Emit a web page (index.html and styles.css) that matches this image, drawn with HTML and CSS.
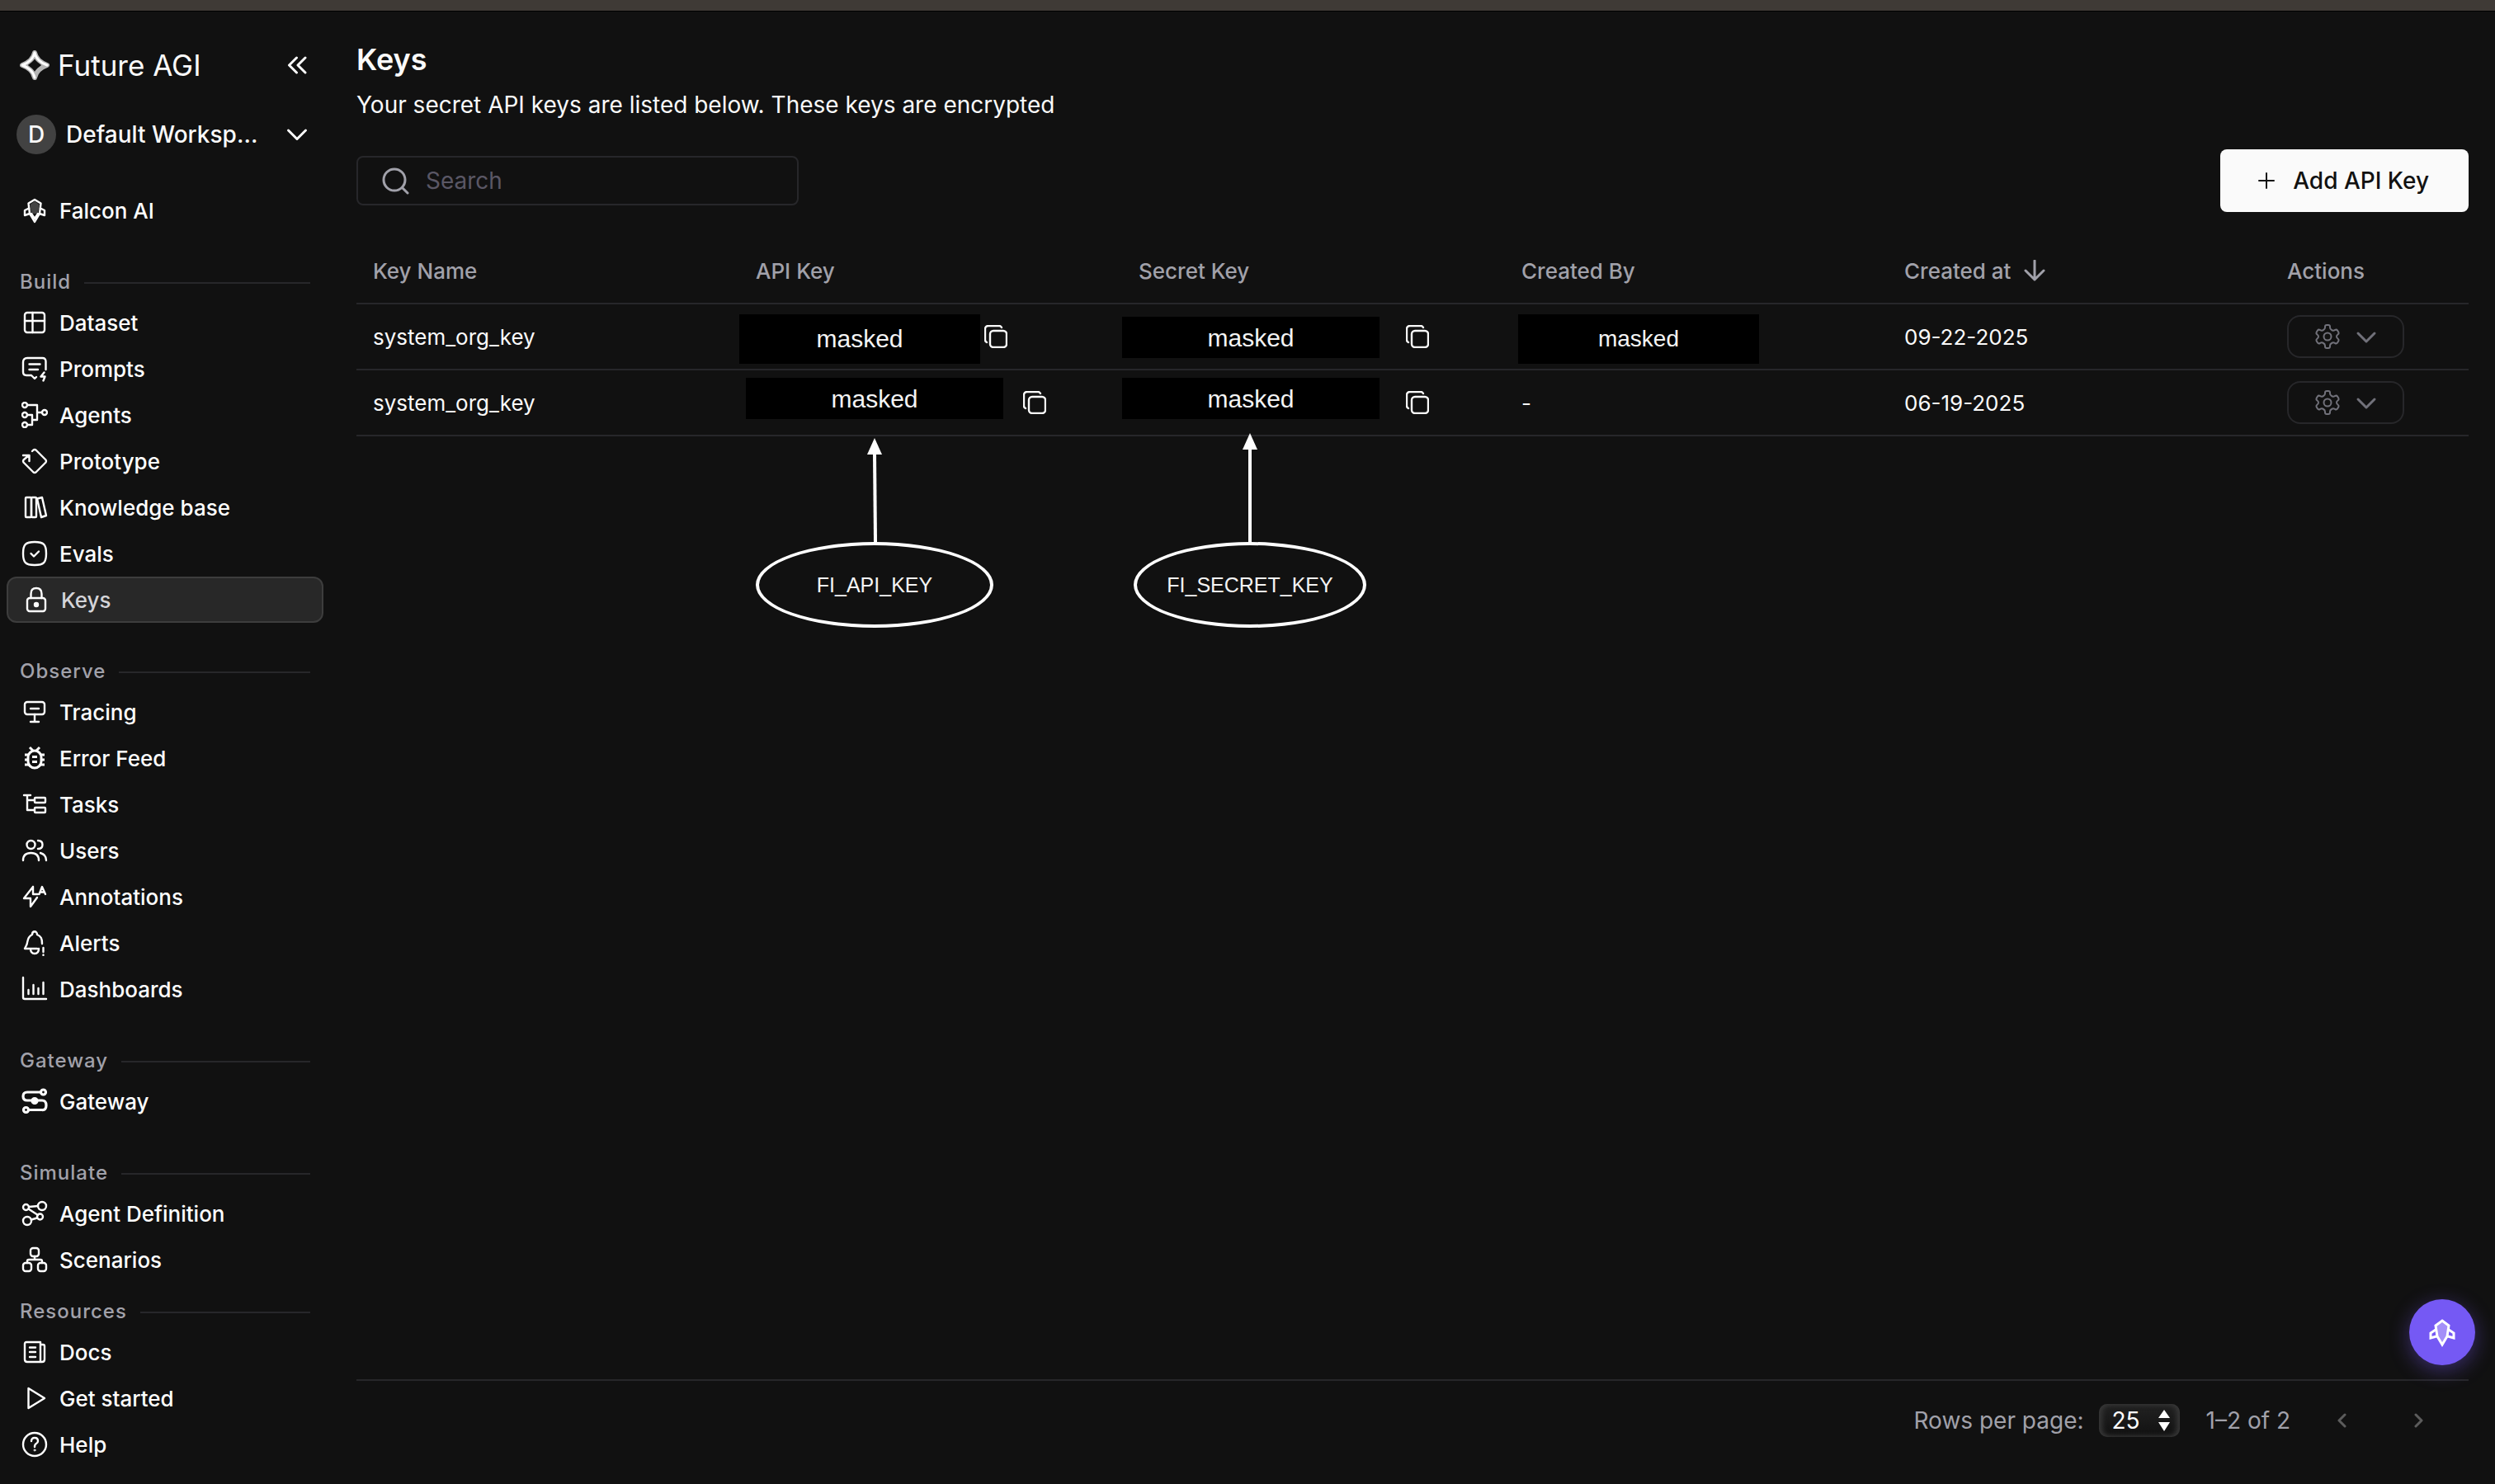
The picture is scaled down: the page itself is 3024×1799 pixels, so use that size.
FILE: index.html
```html
<!DOCTYPE html>
<html lang="en">
<head>
  <meta charset="UTF-8">
  <title>Keys - Future AGI</title>
  <link rel="stylesheet" href="styles.css">
</head>
<body>
  <div class="topbar"></div>

  <div class="layout">
    <aside class="sidebar">
      <div class="brand">
        <svg class="brand-mark" width="36" height="36" viewBox="0 0 36 36" fill="none" stroke-linejoin="round">
          <path d="M18 3C19.500 10 26 15.500 33 18C26 20.500 19.500 26 18 33C16.500 26 10 20.500 3 18C10 15.500 16.500 10 18 3Z" stroke="#b5b5b5" stroke-width="6"/>
          <path d="M18 3C16.500 10 10 15.500 3 18C10 20.500 16.500 26 18 33M18 3C19.500 10 26 15.500 33 18" stroke="#fff" stroke-width="3" stroke-linecap="round"/>
        </svg>
        <span class="brand-name">Future AGI</span>
        <button class="icon-btn" type="button" aria-label="Collapse sidebar">
          <svg width="24" height="24" viewBox="0 0 24 24" class="line bold"><path d="M11.500 3L2.500 12l9 9M22 3l-9 9 9 9"/></svg>
        </button>
      </div>

      <button class="workspace" type="button">
        <span class="avatar">D</span>
        <span class="workspace-name">Default Worksp...</span>
        <svg width="26" height="26" viewBox="0 0 26 26" class="line bold"><path d="M2.500 8L13 18.500 23.500 8"/></svg>
      </button>

      <nav>
        <a class="item" href="#">
          <svg width="32" height="32" viewBox="0 0 32 32" class="line"><path d="M16 3l7.500 4.500L22 20l-6 10-6-10L8.500 7.500z"/><path d="M16 5l5.500 4L20 20h-8L10.500 9z" fill="#444" stroke="none"/><path d="M9 13.500L4 16v6l6-2M23 13.500l5 2.500v6l-6-2M12 20l4 6 4-6"/></svg>
          Falcon AI
        </a>

        <h2 class="section">Build</h2>
        <a class="item" href="#">
          <svg width="32" height="32" viewBox="0 0 32 32" class="line"><rect x="4" y="4" width="24" height="24" rx="3"/><path d="M13.500 4v24M4 14h24"/></svg>
          Dataset
        </a>
        <a class="item" href="#">
          <svg width="32" height="32" viewBox="0 0 32 32" class="line"><path d="M29.500 17V7q0-4-4-4H7Q2 3 2 8v12q0 4 4 4h6l4 4 2-2M9.500 10.500h13M9.500 17H20"/><path d="M27.500 20.500l-4 5h5l-2 5"/></svg>
          Prompts
        </a>
        <a class="item" href="#">
          <svg width="32" height="32" viewBox="0 0 32 32" class="line"><circle cx="4" cy="4" r="3"/><circle cx="4" cy="16" r="3"/><circle cx="4" cy="28" r="3"/><circle cx="28" cy="13" r="3"/><path d="M7 4h12v18h-6M7 16h6v12H7M19 13h6"/></svg>
          Agents
        </a>
        <a class="item" href="#">
          <svg width="32" height="32" viewBox="0 0 32 32" class="line"><path d="M13 4l1.500-1.500q1.500-1 3 0L29.500 14.500q1 1.500 0 3L17.500 29.500q-1.500 1-3 0L2.500 17.500q-1-1.500 0-3L9 9M2 9h7.500v7"/></svg>
          Prototype
        </a>
        <a class="item" href="#">
          <svg width="32" height="32" viewBox="0 0 32 32" class="line"><rect x="5" y="4" width="7" height="24" rx="1"/><rect x="12" y="4" width="6" height="24" rx="1"/><path d="M19 5.500l6-1.500 5 22-6 2z"/></svg>
          Knowledge base
        </a>
        <a class="item" href="#">
          <svg width="32" height="32" viewBox="0 0 32 32" class="line"><path d="M16 2c11 0 14 3 14 14s-3 14-14 14S2 27 2 16 5 2 16 2z"/><path d="M11.500 16l3.500 3.500 6-6"/></svg>
          Evals
        </a>
        <a class="item active" href="#" aria-current="page">
          <svg width="32" height="32" viewBox="0 0 32 32" class="line"><rect x="5" y="14" width="22" height="16" rx="3"/><path d="M9.500 14V9q0-7 6.500-7t6.500 7v5"/><circle cx="16" cy="22" r="2" fill="#fff"/></svg>
          Keys
        </a>

        <h2 class="section">Observe</h2>
        <a class="item" href="#">
          <svg width="32" height="32" viewBox="0 0 32 32" class="line"><rect x="4" y="4" width="24" height="15" rx="3"/><path d="M11 12h10M16 19v9M11 28h10"/></svg>
          Tracing
        </a>
        <a class="item" href="#">
          <svg width="32" height="32" viewBox="0 0 32 32" class="line square"><rect x="8" y="7" width="16" height="21" rx="8"/><path d="M13 14.500h6M13 20.500h6M4 12h4M4 18h4M4 24h5M24 12h4M24 18h4M23 24h5M10 3l4 4M22 3l-4 4"/></svg>
          Error Feed
        </a>
        <a class="item" href="#">
          <svg width="32" height="32" viewBox="0 0 32 32" class="line"><path d="M3 5h8M7 5v18h8M7 11h8"/><rect x="16" y="8" width="13" height="6" rx="1"/><rect x="16" y="20" width="13" height="6" rx="1"/></svg>
          Tasks
        </a>
        <a class="item" href="#">
          <svg width="32" height="32" viewBox="0 0 32 32" class="line"><circle cx="11.500" cy="9" r="5"/><path d="M20 4q5.500 0 5.500 5T20 14M2 28q0-9 9.500-9t9.500 9M23 19q7 2 7 9"/></svg>
          Users
        </a>
        <a class="item" href="#">
          <svg width="32" height="32" viewBox="0 0 32 32" class="line"><path d="M14 4L3 18h8v10l8-11M14 4v9h6M21.500 13L25 4l4 9M23 10.500h4.500"/></svg>
          Annotations
        </a>
        <a class="item" href="#">
          <svg width="32" height="32" viewBox="0 0 32 32" class="line"><path d="M25 17c0-6-1-9-6-11 0-5-6-5-6 0-7 3-5 10-7 13l-2 4h15M11 23q0 6 5 6t5-6M26.500 22v5M26.500 30.500v.5"/></svg>
          Alerts
        </a>
        <a class="item" href="#">
          <svg width="32" height="32" viewBox="0 0 32 32" class="line"><path d="M2 2v24q0 2 2 2h26M8.500 17v5M14.500 11v11M20.500 15v7M26.500 8v14"/></svg>
          Dashboards
        </a>

        <h2 class="section">Gateway</h2>
        <a class="item" href="#">
          <svg width="32" height="32" viewBox="0 0 32 32" class="line heavy"><circle cx="26.500" cy="5" r="3"/><circle cx="5.500" cy="26.500" r="3"/><path d="M23 5H7Q2 5 2 10t5 5h18q5 0 5 6t-5 5.500H9"/><circle cx="16" cy="15.500" r="3" fill="#fff"/></svg>
          Gateway
        </a>

        <h2 class="section">Simulate</h2>
        <a class="item" href="#">
          <svg width="32" height="32" viewBox="0 0 32 32" class="line"><circle cx="5.500" cy="8.500" r="3.500"/><circle cx="25" cy="7" r="5"/><circle cx="22.500" cy="20" r="3.500"/><circle cx="7" cy="25" r="5"/><path d="M9 8l11-1M8.500 10.500L20 18M12 23.500l7-2"/></svg>
          Agent Definition
        </a>
        <a class="item" href="#">
          <svg width="32" height="32" viewBox="0 0 32 32" class="line"><rect x="11" y="2" width="10" height="10" rx="3"/><rect x="2" y="20" width="10" height="10" rx="3"/><rect x="20" y="20" width="10" height="10" rx="3"/><path d="M16 12v4M7 20v-2q0-2 2-2h14q2 0 2 2v2"/></svg>
          Scenarios
        </a>

        <h2 class="section tight">Resources</h2>
        <a class="item" href="#">
          <svg width="32" height="32" viewBox="0 0 32 32" class="line"><path d="M23 28H7q-3 0-3-3V6q0-2 2-2h17v24h2q3 0 3-3V9q0-2-2-2h-3M10 10.500h7M10 16h7M10 22h7"/></svg>
          Docs
        </a>
        <a class="item" href="#">
          <svg width="32" height="32" viewBox="0 0 32 32" class="line"><path d="M8.500 4v24L28 16z"/></svg>
          Get started
        </a>
        <a class="item" href="#">
          <svg width="32" height="32" viewBox="0 0 32 32" class="line"><circle cx="16" cy="16" r="14"/><path d="M12 12q0-4 4-4t4 4q0 2-2 3t-2 4"/><circle cx="16" cy="23" r="1" stroke-width="1"/></svg>
          Help
        </a>
      </nav>
    </aside>

    <main class="main">
      <h1>Keys</h1>
      <p class="subtitle">Your secret API keys are listed below. These keys are encrypted</p>

      <div class="toolbar">
        <label class="search">
          <svg width="34" height="34" viewBox="0 0 34 34" class="line bold"><circle cx="16" cy="16" r="13"/><path d="M25.500 25.500L32 32"/></svg>
          <input type="search" placeholder="Search" aria-label="Search">
        </label>
        <button class="add-btn" type="button">
          <svg width="20" height="20" viewBox="0 0 20 20" class="line"><path d="M10 1v18M1 10h18"/></svg>
          Add API Key
        </button>
      </div>

      <table class="keys">
        <thead>
          <tr>
            <th>Key Name</th>
            <th>API Key</th>
            <th>Secret Key</th>
            <th>Created By</th>
            <th>
              <span class="sorted">Created at
                <svg width="26" height="26" viewBox="0 0 26 26" class="line bold"><path d="M13 1v23M2 13l11 11 11-11"/></svg>
              </span>
            </th>
            <th class="col-actions">Actions</th>
          </tr>
        </thead>
        <tbody>
          <tr>
            <td>system_org_key</td>
            <td>
              <button class="copy copy-api" type="button" aria-label="Copy API key">
                <svg width="28" height="28" viewBox="0 0 28 28" class="line"><rect x="7" y="7" width="20" height="20" rx="4"/><path d="M3 21q-2-1-2-3V5q0-4 4-4h13q2 0 3 2"/></svg>
              </button>
              <span class="mask mask-tall">masked</span>
            </td>
            <td>
              <button class="copy copy-secret" type="button" aria-label="Copy secret key">
                <svg width="28" height="28" viewBox="0 0 28 28" class="line"><rect x="7" y="7" width="20" height="20" rx="4"/><path d="M3 21q-2-1-2-3V5q0-4 4-4h13q2 0 3 2"/></svg>
              </button>
              <span class="mask mask-wide">masked</span>
            </td>
            <td><span class="mask mask-tall mask-owner">masked</span></td>
            <td>09-22-2025</td>
            <td>
              <button class="actions" type="button" aria-label="Key actions">
                <svg width="32" height="32" viewBox="0 0 32 32" class="line"><path d="M13 4q0-2 2-2h2q2 0 2 2v1q0 2 2 3l1 .5q1.500.5 3-.5 2-1 3 .5l1.500 2.500q.5 1.500-1 2.500-1.500 1-1.500 2.500t1.500 2.500q1.500 1 1 2.500L28 23.500q-1 1.500-3 .5-1.500-1-3-.5l-1 .5q-2 1-2 3v1q0 2-2 2h-2q-2 0-2-2v-1q0-2-2-3l-1-.5q-1.500-.5-3 .5-2 1-3-.5L2.500 21q-.5-1.500 1-2.500Q5 17.500 5 16t-1.500-2.500q-1.500-1-1-2.500L4 8.500q1-1.500 3-.5 1.500 1 3 .5l1-.5q2-1 2-3z"/><circle cx="16" cy="16" r="4.500"/></svg>
                <svg width="26" height="26" viewBox="0 0 26 26" class="line bold"><path d="M3 9l10 10L23 9"/></svg>
              </button>
            </td>
          </tr>
          <tr>
            <td>system_org_key</td>
            <td>
              <button class="copy copy-secret" type="button" aria-label="Copy API key">
                <svg width="28" height="28" viewBox="0 0 28 28" class="line"><rect x="7" y="7" width="20" height="20" rx="4"/><path d="M3 21q-2-1-2-3V5q0-4 4-4h13q2 0 3 2"/></svg>
              </button>
              <span class="mask mask-wide mask-upper mask-inset">masked</span>
              <div class="callout callout-api">
                <svg width="20" height="126" viewBox="0 0 20 126"><path d="M10 0l9 20H1z" fill="#fff"/><path d="M10 18l1 108" stroke="#fff" stroke-width="4"/></svg>
                <span class="callout-label">FI_API_KEY</span>
              </div>
            </td>
            <td>
              <button class="copy copy-secret" type="button" aria-label="Copy secret key">
                <svg width="28" height="28" viewBox="0 0 28 28" class="line"><rect x="7" y="7" width="20" height="20" rx="4"/><path d="M3 21q-2-1-2-3V5q0-4 4-4h13q2 0 3 2"/></svg>
              </button>
              <span class="mask mask-wide mask-upper">masked</span>
              <div class="callout callout-secret">
                <svg width="20" height="132" viewBox="0 0 20 132"><path d="M10 0l9 20H1z" fill="#fff"/><path d="M10 18v114" stroke="#fff" stroke-width="4"/></svg>
                <span class="callout-label">FI_SECRET_KEY</span>
              </div>
            </td>
            <td>-</td>
            <td>06-19-2025</td>
            <td>
              <button class="actions" type="button" aria-label="Key actions">
                <svg width="32" height="32" viewBox="0 0 32 32" class="line"><path d="M13 4q0-2 2-2h2q2 0 2 2v1q0 2 2 3l1 .5q1.500.5 3-.5 2-1 3 .5l1.500 2.500q.5 1.500-1 2.500-1.500 1-1.500 2.500t1.500 2.500q1.500 1 1 2.500L28 23.500q-1 1.500-3 .5-1.500-1-3-.5l-1 .5q-2 1-2 3v1q0 2-2 2h-2q-2 0-2-2v-1q0-2-2-3l-1-.5q-1.500-.5-3 .5-2 1-3-.5L2.500 21q-.5-1.500 1-2.500Q5 17.500 5 16t-1.500-2.500q-1.500-1-1-2.500L4 8.500q1-1.500 3-.5 1.500 1 3 .5l1-.5q2-1 2-3z"/><circle cx="16" cy="16" r="4.500"/></svg>
                <svg width="26" height="26" viewBox="0 0 26 26" class="line bold"><path d="M3 9l10 10L23 9"/></svg>
              </button>
            </td>
          </tr>
        </tbody>
      </table>

      <footer class="pager">
        <label for="rows">Rows per page:</label>
        <span class="rows">
          <select id="rows"><option>25</option><option>50</option><option>100</option></select>
          <svg width="14" height="26" viewBox="0 0 14 26" fill="#fff"><path d="M7 0l7 10H0zM0 15h14L7 26z"/></svg>
        </span>
        <span class="range">1–2 of 2</span>
        <button class="page-btn" type="button" aria-label="Previous page" disabled>
          <svg width="12" height="20" viewBox="0 0 12 20" class="line bold"><path d="M10 3L3 10l7 7"/></svg>
        </button>
        <button class="page-btn" type="button" aria-label="Next page" disabled>
          <svg width="12" height="20" viewBox="0 0 12 20" class="line bold"><path d="M2 3l7 7-7 7"/></svg>
        </button>
      </footer>
    </main>
  </div>

  <button class="fab" type="button" aria-label="Open Falcon AI">
    <svg width="32" height="36" viewBox="0 0 32 36" class="line bold sharp"><path d="M16 4l8 6-2 13-6 10-6-10L8 10z" fill="#a48ff8"/><path d="M8 15l-6 4v6l7-2M24 15l6 4v6l-7-2"/></svg>
  </button>
</body>
</html>
```
FILE: styles.css
```css
* {
  box-sizing: border-box;
}
body {
  margin: 0;
  min-height: 100vh;
  display: flex;
  flex-direction: column;
  background: #111111;
  color: #fafafa;
  font-family: Inter, "Liberation Sans", sans-serif;
  font-size: 26px;
}
button, input, select {
  font: inherit;
  color: inherit;
  background: none;
  border: 0;
  padding: 0;
}
svg {
  flex: none;
  display: block;
}
.line {
  fill: none;
  stroke: currentColor;
  stroke-width: 2;
  stroke-linecap: round;
  stroke-linejoin: round;
}
.item .line, .copy .line {
  stroke-width: 2.4;
}
.line.bold, .line.heavy {
  stroke-width: 3;
}
.item .heavy {
  stroke-width: 3.2;
}
.item .square {
  stroke-width: 3;
  stroke-linecap: butt;
}
.sharp {
  stroke-linejoin: miter;
}
.topbar {
  height: 14px;
  background: #3f3a36;
  border-bottom: 1px solid #000;
}
.layout {
  flex: 1;
  display: flex;
}

/* sidebar */
.sidebar {
  width: 400px;
  flex: none;
  padding: 42px 8px 20px;
}
.brand {
  display: flex;
  align-items: center;
  height: 46px;
  padding: 0 20px 0 16px;
}
.brand-name {
  flex: 1;
  margin-left: 10px;
  font-size: 35px;
}
.workspace {
  display: flex;
  align-items: center;
  width: 100%;
  height: 48px;
  margin: 37px 0 40px;
  padding: 0 19px 0 12px;
  font-size: 28px;
  font-weight: 500;
  text-align: left;
}
.avatar {
  width: 48px;
  height: 48px;
  margin-right: 12px;
  border-radius: 50%;
  background: #424242;
  line-height: 48px;
  text-align: center;
}
.workspace-name {
  flex: 1;
}
.item {
  display: flex;
  align-items: center;
  gap: 14px;
  height: 56px;
  padding: 0 18px;
  color: #fff;
  font-weight: 500;
  text-decoration: none;
}
.item.active {
  border: 2px solid #3d3d3d;
  border-radius: 12px;
  background: #282828;
  color: #d4d4d8;
}
.item.active svg {
  color: #fff;
}
.section {
  display: flex;
  align-items: center;
  gap: 16px;
  height: 40px;
  margin: 40px 16px 0;
  padding-bottom: 4px;
  color: #a1a1aa;
  font-size: 24px;
  font-weight: 500;
  letter-spacing: 1px;
}
.section::after {
  content: "";
  flex: 1;
  height: 2px;
  margin-top: 4px;
  background: #27272a;
}
.section.tight {
  margin-top: 16px;
}

/* main */
.main {
  flex: 1;
  display: flex;
  flex-direction: column;
  padding: 36px 32px 57px;
}
h1 {
  margin: 0;
  font-size: 36px;
  font-weight: 600;
  line-height: 44px;
}
.subtitle {
  margin: 11px 0 32px;
  font-size: 28px;
  line-height: 44px;
}
.toolbar {
  display: flex;
  align-items: center;
  justify-content: space-between;
}
.search {
  display: flex;
  align-items: center;
  gap: 20px;
  width: 536px;
  height: 60px;
  padding: 0 28px;
  border: 2px solid #27272a;
  border-radius: 8px;
  color: #a1a1aa;
  font-size: 28px;
}
.search input {
  flex: 1;
  min-width: 0;
  outline: none;
}
.search input::placeholder {
  color: #5a5765;
}
.add-btn {
  display: flex;
  align-items: center;
  gap: 22px;
  height: 76px;
  padding: 0 48px 0 46px;
  border-radius: 8px;
  background: #fafafa;
  color: #111;
  font-size: 28px;
  font-weight: 500;
}

.keys {
  width: 100%;
  margin-top: 32px;
  border-collapse: separate;
  border-spacing: 0;
  table-layout: fixed;
}
.keys th, .keys td {
  position: relative;
  height: 80px;
  padding: 0 20px;
  border-bottom: 2px solid #27272a;
  text-align: left;
  font-weight: 400;
}
.keys th {
  color: #a1a1aa;
  font-weight: 500;
}
.keys .col-actions {
  width: 240px;
}
.sorted {
  display: flex;
  align-items: center;
  gap: 16px;
}
.copy {
  display: block;
}
.copy-api {
  margin-left: 277px;
}
.copy-secret {
  margin-left: 324px;
}
.mask {
  position: absolute;
  top: 15px;
  left: 0;
  width: 312px;
  height: 50px;
  background: #000;
  color: #f4f4f4;
  font-family: "Liberation Sans", Arial, sans-serif;
  font-size: 30px;
  line-height: 52px;
  text-align: center;
}
.mask-tall {
  top: 12px;
  width: 292px;
  height: 60px;
  line-height: 60px;
}
.mask-owner {
  left: 16px;
  font-size: 28px;
}
.mask-upper {
  top: 9px;
}
.mask-inset {
  left: 8px;
}
.callout {
  position: absolute;
  display: flex;
  flex-direction: column;
  align-items: center;
  z-index: 1;
}
.callout-api {
  top: 82px;
  left: 20px;
  width: 288px;
}
.callout-secret {
  top: 76px;
  left: 14px;
  width: 282px;
}
.callout-label {
  width: 100%;
  height: 104px;
  border: 4px solid #fff;
  border-radius: 50%;
  color: #f4f4f4;
  font-family: "Liberation Sans", Arial, sans-serif;
  font-size: 25px;
  line-height: 96px;
  text-align: center;
}
.actions {
  display: flex;
  align-items: center;
  justify-content: center;
  gap: 18px;
  width: 142px;
  height: 52px;
  border: 2px solid #27272a;
  border-radius: 16px;
  color: #71717a;
}

/* pagination */
.pager {
  display: flex;
  align-items: center;
  justify-content: flex-end;
  margin-top: auto;
  padding: 28px 54px 0 0;
  border-top: 2px solid #27272a;
  color: #a1a1aa;
  font-size: 28px;
}
.rows {
  position: relative;
  margin: 0 32px 0 18px;
  color: #fff;
}
.rows select {
  appearance: none;
  display: block;
  width: 98px;
  height: 40px;
  padding-left: 16px;
  border-radius: 10px;
  background: linear-gradient(#222, #111);
  box-shadow: inset 4px 0 6px #383838, inset -4px 0 6px #383838;
}
.rows svg {
  position: absolute;
  top: 7px;
  right: 12px;
  pointer-events: none;
}
.range {
  margin-right: 56px;
}
.page-btn {
  color: #5c5c5c;
}
.page-btn + .page-btn {
  margin-left: 82px;
}
.fab {
  position: fixed;
  right: 24px;
  bottom: 144px;
  display: flex;
  align-items: center;
  justify-content: center;
  width: 80px;
  height: 80px;
  border-radius: 50%;
  background: #7559f4;
  box-shadow: 0 6px 24px rgba(120, 87, 245, 0.4);
  color: #fff;
}
```
